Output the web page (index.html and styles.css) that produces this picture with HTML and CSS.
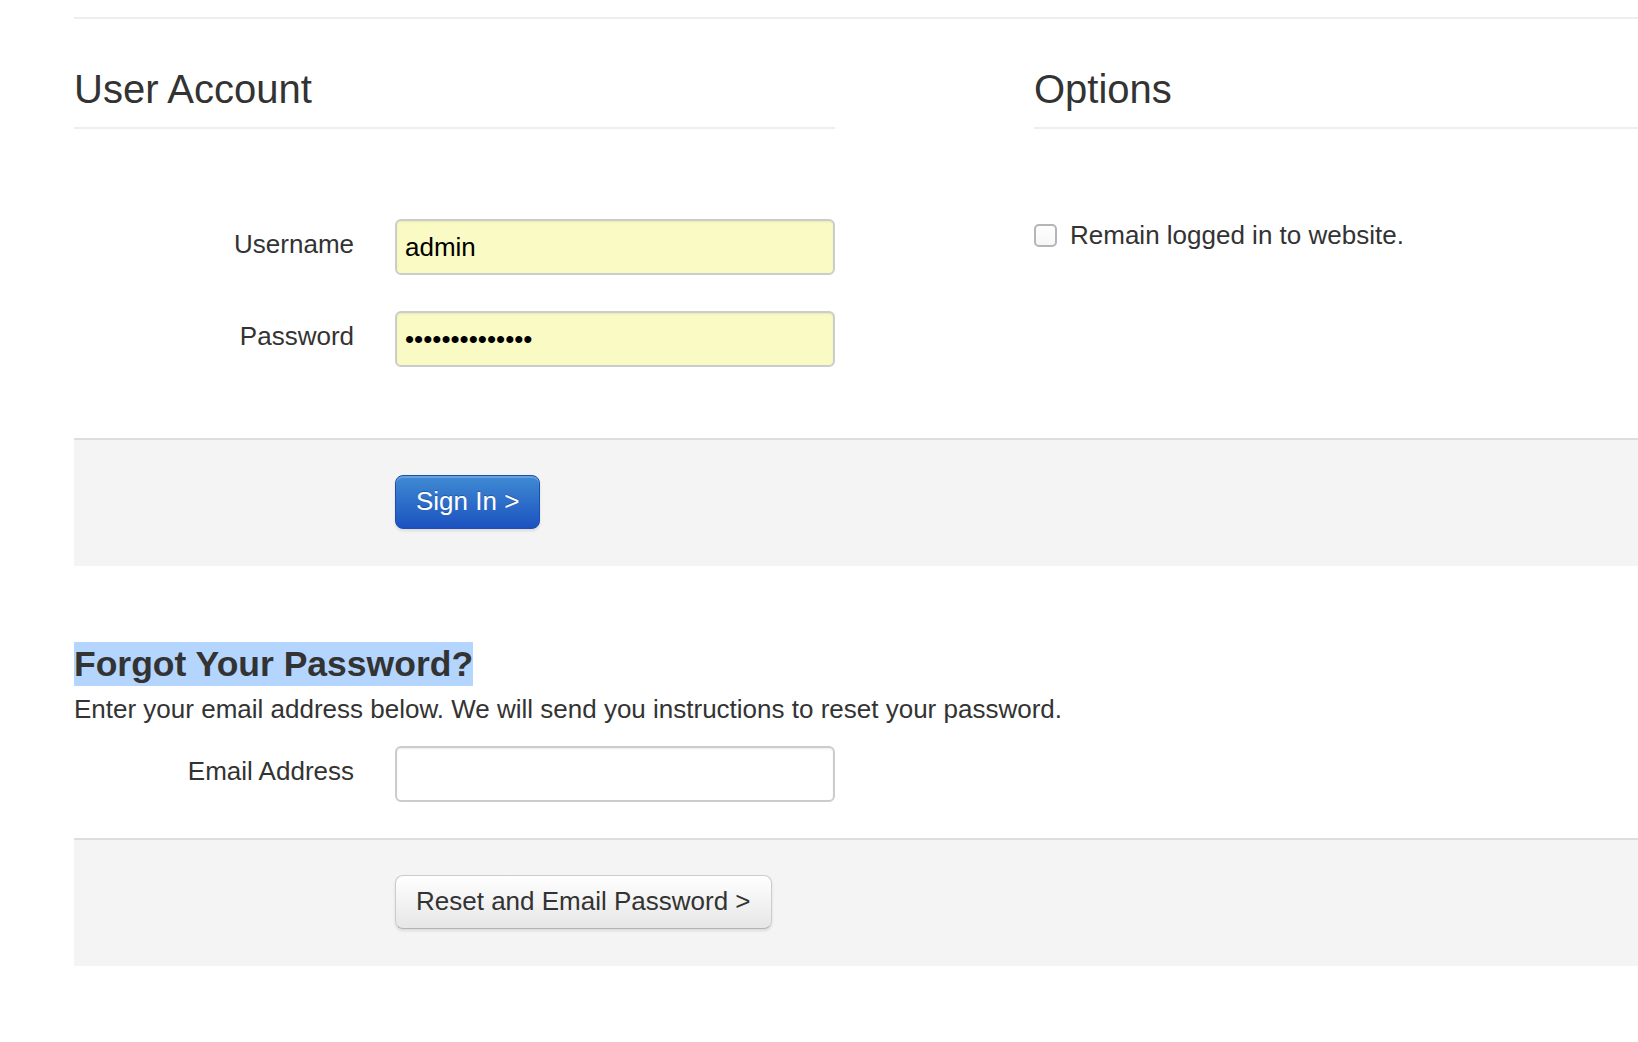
FILE: index.html
```html
<!DOCTYPE html>
<html lang="en">
<head>
<meta charset="utf-8">
<title>Sign In</title>
<link rel="stylesheet" href="styles.css">
</head>
<body>
<div class="page">
  <div class="cols">
    <div class="col-left">
      <h2 class="section-title">User Account</h2>
      <div class="fields">
        <div class="field">
          <label class="field-label" for="uName">Username</label>
          <input class="text-input autofill" id="uName" type="text" value="admin">
        </div>
        <div class="field">
          <label class="field-label" for="uPassword">Password</label>
          <input class="text-input autofill" id="uPassword" type="password" value="abcdefghijklmn">
        </div>
      </div>
    </div>
    <div class="col-right">
      <h2 class="section-title">Options</h2>
      <label class="option">
        <span class="checkbox"></span>
        <span>Remain logged in to website.</span>
      </label>
    </div>
  </div>

  <div class="actions">
    <button class="btn btn-primary" type="button">Sign In &gt;</button>
  </div>

  <h3 class="forgot-title"><span class="selected">Forgot Your Password?</span></h3>
  <p class="help">Enter your email address below. We will send you instructions to reset your password.</p>
  <div class="field email-field">
    <label class="field-label" for="uEmail">Email Address</label>
    <input class="text-input" id="uEmail" type="text" value="">
  </div>

  <div class="actions">
    <button class="btn btn-default" type="button">Reset and Email Password &gt;</button>
  </div>
</div>
</body>
</html>
```
FILE: styles.css
```css
html, body {
  margin: 0;
  padding: 0;
  background: #ffffff;
}

body {
  font-family: "Liberation Sans", Arial, Helvetica, sans-serif;
  font-size: 26px;
  color: #333333;
  overflow-x: hidden;
}

.page {
  margin-top: 17px;
  margin-left: 74px;
  border-top: 2px solid #eeeeee;
}

.cols {
  display: flex;
  gap: 199px;
  margin-top: 43px;
}

.col-left {
  width: 761px;
  flex: none;
}

.col-right {
  flex: 1;
}

.section-title {
  margin: 0;
  font-size: 40px;
  font-weight: normal;
  line-height: 54px;
  padding-bottom: 11px;
  border-bottom: 2px solid #eeeeee;
  color: #333333;
}

.fields {
  margin-top: 90px;
  display: flex;
  flex-direction: column;
  gap: 36px;
}

.field {
  display: flex;
  align-items: center;
  gap: 41px;
}

.field-label {
  width: 280px;
  flex: none;
  text-align: right;
  line-height: 36px;
  padding-bottom: 6px;
  color: #333333;
}

.text-input {
  box-sizing: border-box;
  width: 440px;
  height: 56px;
  margin: 0;
  padding: 0 8px;
  border: 2px solid #cccccc;
  border-radius: 6px;
  background: #ffffff;
  box-shadow: inset 0 1px 2px rgba(0, 0, 0, 0.08);
  font-family: "Liberation Sans", Arial, Helvetica, sans-serif;
  font-size: 26px;
  color: #000000;
  outline: none;
}

.text-input.autofill {
  background: #fafbc4;
}

.option {
  display: flex;
  align-items: center;
  gap: 13px;
  margin-top: 88px;
  line-height: 36px;
  color: #333333;
}

.checkbox {
  box-sizing: border-box;
  width: 23px;
  height: 23px;
  border: 2px solid #b5b5b5;
  border-radius: 5px;
  background: linear-gradient(#ffffff, #f6f6f6);
  flex: none;
}

.actions {
  margin-top: 71px;
  border-top: 2px solid #dddddd;
  background: #f4f4f4;
  padding: 35px 0 37px 321px;
}

.btn {
  box-sizing: border-box;
  height: 54px;
  margin: 0;
  padding: 0 20px 2px;
  border-radius: 8px;
  font-family: "Liberation Sans", Arial, Helvetica, sans-serif;
  font-size: 26px;
  line-height: 50px;
  cursor: pointer;
}

.btn-primary {
  color: #ffffff;
  border: 1px solid #1c4fae;
  background: linear-gradient(#3f8bd3, #1c52c0);
  text-shadow: 0 -1px 0 rgba(0, 0, 0, 0.25);
  box-shadow: inset 0 2px 0 rgba(255, 255, 255, 0.2), 0 2px 3px rgba(0, 0, 0, 0.1);
}

.btn-default {
  color: #333333;
  border: 1px solid #cccccc;
  border-bottom-color: #b3b3b3;
  background: linear-gradient(#ffffff, #e6e6e6);
  box-shadow: inset 0 2px 0 rgba(255, 255, 255, 0.3), 0 2px 3px rgba(0, 0, 0, 0.1);
}

.forgot-title {
  margin: 76px 0 0;
  font-size: 35.5px;
  font-weight: bold;
  line-height: 44px;
  color: #333333;
}

.selected {
  display: inline-block;
  background: #b4d5fd;
}

.help {
  margin: 0;
  padding-top: 5px;
  line-height: 36px;
  color: #333333;
}

.email-field {
  margin-top: 19px;
}

.email-field + .actions {
  margin-top: 36px;
}
```
